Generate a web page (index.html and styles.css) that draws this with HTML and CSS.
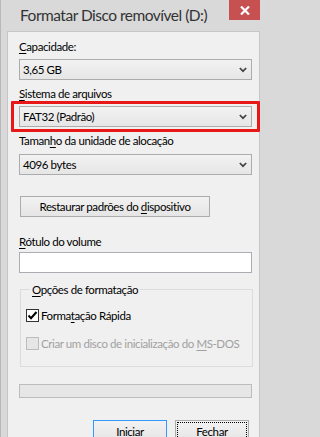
FILE: index.html
```html
<!DOCTYPE html>
<html lang="pt">
<head>
<meta charset="utf-8">
<title>Formatar Disco removível (D:)</title>
<link rel="stylesheet" href="styles.css">
</head>
<body>
<div class="window">
  <div class="titlebar">
    <span class="title">Formatar Disco removível (D:)</span>
    <span class="close"><svg width="10" height="9" viewBox="0 0 10 9"><path d="M1 0.5 L9 8.5 M9 0.5 L1 8.5" stroke="#fff" stroke-width="2.2" fill="none"/></svg></span>
  </div>
  <div class="client">
    <div class="label lbl-cap"><u>C</u>apacidade:</div>
    <div class="combo"><span>3,65 GB</span><svg class="chev" width="8" height="6" viewBox="0 0 8 6"><path d="M0.8 1 L4 4.2 L7.2 1" stroke="#444" stroke-width="1.7" fill="none"/></svg></div>
    <div class="label"><u>S</u>istema de arquivos</div>
    <div class="combo highlight"><span>FAT32 (Padrão)</span><svg class="chev" width="8" height="6" viewBox="0 0 8 6"><path d="M0.8 1 L4 4.2 L7.2 1" stroke="#444" stroke-width="1.7" fill="none"/></svg></div>
    <div class="label lbl-size">Taman<u>h</u>o da unidade de alocação</div>
    <div class="combo"><span>4096 bytes</span><svg class="chev" width="8" height="6" viewBox="0 0 8 6"><path d="M0.8 1 L4 4.2 L7.2 1" stroke="#444" stroke-width="1.7" fill="none"/></svg></div>
    <button class="btn restore">Restaurar padrões do <u>d</u>ispositivo</button>
    <div class="label lbl-vol"><u>R</u>ótulo do volume</div>
    <div class="textbox"></div>
    <fieldset class="group">
      <legend><u>O</u>pções de formatação</legend>
      <div class="check-row first">
        <span class="checkbox checked"><svg width="11" height="11" viewBox="0 0 11 11"><path d="M1.5 5.5 L4 8.2 L9.5 2" stroke="#000" stroke-width="2" fill="none"/></svg></span>
        <span>Forma<u>t</u>ação Rápida</span>
      </div>
      <div class="check-row second disabled">
        <span class="checkbox"></span>
        <span>Criar um disco de inicialização do <u>M</u>S-DOS</span>
      </div>
    </fieldset>
    <div class="progress"></div>
    <div class="actions">
      <button class="btn default"><u>I</u>niciar</button>
      <button class="btn focused"><u>F</u>echar</button>
    </div>
  </div>
</div>
</body>
</html>
```

FILE: styles.css
```css
* { box-sizing: border-box; }
html {
  background: #d9d9d9;
}
html, body {
  margin: 0;
  padding: 0;
}
body {
  width: 266px;
  height: 437px;
  overflow: hidden;
  background: #d9d9d9;
}
.window {
  width: 266px;
  height: 437px;
  border-left: 1px solid #b8b8b8;
  font-family: "Lato", "Noto Sans", sans-serif;
  font-size: 11.5px;
  line-height: 15px;
  letter-spacing: -0.4px;
  color: #000;
}
.titlebar {
  height: 31px;
  display: flex;
  justify-content: space-between;
  align-items: flex-start;
  padding-right: 6px;
}
.title {
  padding-left: 19px;
  padding-top: 5px;
  font-size: 15.5px;
  line-height: 20px;
  letter-spacing: -0.5px;
  color: #333;
  white-space: nowrap;
}
.close {
  flex-shrink: 0;
  width: 31px;
  height: 20px;
  background: #c75050;
  display: flex;
  align-items: center;
  justify-content: center;
}
.client {
  margin-left: 6px;
  width: 253px;
  height: 420px;
  background: #f0f0f0;
  border: 1px solid #c6c6c6;
  padding: 7px 0 0 11px;
}
.label {
  height: 15px;
  white-space: nowrap;
  margin-top: 6px;
  margin-bottom: 5px;
}
.lbl-cap { margin-top: 0; }
.lbl-size { margin-bottom: 6px; }
.lbl-vol { margin-top: 17px; margin-bottom: 3px; }
u { text-decoration: underline; text-underline-offset: 2px; text-decoration-thickness: 1px; }
.combo {
  position: relative;
  width: 233px;
  height: 21px;
  border: 1px solid #acacac;
  background: linear-gradient(#f2f2f2, #e6e6e6);
  display: flex;
  align-items: center;
  justify-content: space-between;
  padding: 0 4px 0 3px;
}
.combo .chev { display: block; }
.highlight::after {
  content: "";
  position: absolute;
  top: -6px;
  bottom: -6px;
  left: -9px;
  right: -9px;
  border: 3px solid #e81818;
  border-radius: 1px;
}
.btn {
  font: inherit;
  letter-spacing: inherit;
  color: #000;
  height: 21px;
  border: 1px solid #acacac;
  background: linear-gradient(#f2f2f2, #e5e5e5);
  padding: 0;
  margin: 0;
  display: block;
}
.restore {
  width: 190px;
  margin-left: 1px;
  margin-top: 21px;
}
.textbox {
  width: 233px;
  height: 21px;
  background: #fff;
  border: 1px solid #abadb3;
}
.group {
  margin: 9px 0 0 1px;
  width: 233px;
  border: 1px solid #dcdcdc;
  padding: 0 0 15px 5px;
  min-inline-size: 0;
}
.group legend {
  padding: 0 2px;
  margin-left: 4px;
  line-height: 15px;
}
.check-row {
  display: flex;
  align-items: center;
  height: 15px;
  gap: 2px;
  white-space: nowrap;
}
.check-row.first { margin-top: 11px; }
.check-row.second { margin-top: 13px; }
.checkbox {
  flex-shrink: 0;
  width: 13px;
  height: 13px;
  border: 1px solid #333;
  background: #fff;
  display: flex;
  align-items: center;
  justify-content: center;
}
.disabled { color: #a0a0a0; }
.disabled .checkbox {
  border-color: #bcbcbc;
  background: #e6e6e6;
}
.progress {
  margin-top: 17px;
  width: 233px;
  height: 14px;
  border: 1px solid #bcbcbc;
  background: #e6e6e6;
}
.actions {
  margin-top: 22px;
  display: flex;
  gap: 8px;
  padding-left: 74px;
}
.actions .btn {
  width: 74px;
  height: 23px;
}
.btn.default { border-color: #3399ff; }
.btn.focused {
  outline: 1px dotted #000;
  outline-offset: -3px;
}
```
